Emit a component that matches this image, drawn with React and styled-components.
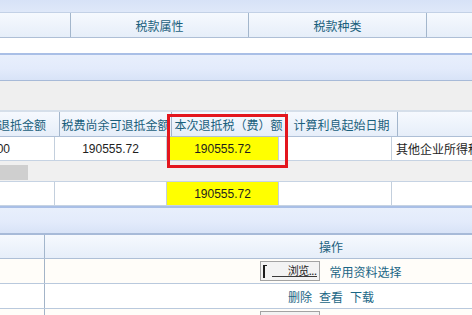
import React from "react";
import styled, { createGlobalStyle } from "styled-components";

const Global = createGlobalStyle`
  html, body { margin: 0; padding: 0; background: #ffffff; overflow: hidden; }
  body { font-family: "Liberation Sans", "Noto Sans CJK SC", sans-serif; font-size: 12px; }
`;

const Page = styled.div`
  position: relative;
  width: 472px;
  height: 315px;
  overflow: hidden;
  display: flex;
  flex-direction: column;
`;

const TopBar = styled.div`
  height: 12px;
  flex: none;
  background: linear-gradient(#d7e2f7, #dfe8f9);
`;

const HeadRow = styled.div`
  display: flex;
  flex: none;
  height: ${(p) => p.$h || 26}px;
  box-sizing: border-box;
  border-top: 1px solid ${(p) => p.$top || "#c3d1e6"};
  border-bottom: 1px solid #aebfd6;
  background: linear-gradient(#f6f9fe, #e6eef9);
`;

const HeadCell = styled.div`
  flex: ${(p) => (p.$w ? "none" : "1")};
  width: ${(p) => (p.$w ? `${p.$w}px` : "auto")};
  box-sizing: border-box;
  border-right: ${(p) => (p.$w ? "1px solid #a3b6cc" : "none")};
  display: flex;
  align-items: center;
  justify-content: ${(p) => p.$align || "center"};
  padding-right: ${(p) => p.$pr || 0}px;
  overflow: hidden;
  white-space: nowrap;
  color: #1a5f7c;
  font-family: "Noto Sans CJK SC", sans-serif;
  font-size: 12px;
`;

const BlankRow = styled.div`
  height: 15px;
  flex: none;
  background: #ffffff;
`;

const Rule = styled.div`
  height: 2px;
  flex: none;
  background: #a9bfe6;
`;

const Band = styled.div`
  height: 26px;
  flex: none;
  box-sizing: border-box;
  border-bottom: 1px solid #a7bad8;
  background: linear-gradient(#e8effc 0%, #e3ebfb 55%, #d8e3f7 100%);
`;

const GrayGap = styled.div`
  height: 30px;
  flex: none;
  background: #efefef;
  border-bottom: 1px solid #d6dfea;
  box-sizing: border-box;
`;

const Grid = styled.div`
  display: flex;
  flex-direction: column;
  flex: none;
`;

const DataRow = styled.div`
  display: flex;
  flex: none;
  height: ${(p) => p.$h || 24}px;
  box-sizing: border-box;
  border-bottom: 1px solid #c6d3e3;
  background: ${(p) => p.$bg || "#ffffff"};
`;

const DataCell = styled.div`
  flex: ${(p) => (p.$w ? "none" : "1")};
  width: ${(p) => (p.$w ? `${p.$w}px` : "auto")};
  box-sizing: border-box;
  border-right: ${(p) => (p.$w ? "1px solid #c3cfdd" : "none")};
  background: ${(p) => (p.$hl ? "#ffff00" : "transparent")};
  display: flex;
  align-items: center;
  justify-content: ${(p) => p.$align || "center"};
  padding: 0 ${(p) => p.$pr || 0}px 0 ${(p) => p.$pl || 0}px;
  overflow: hidden;
  white-space: nowrap;
  color: #1e1e1e;
  font-family: "Liberation Sans", "Noto Sans CJK SC", sans-serif;
  font-size: 12px;
`;

const ScrollRow = styled.div`
  height: 21px;
  flex: none;
  box-sizing: border-box;
  background: #f0f0f0;
  border-bottom: 1px solid #c6d3e3;
  display: flex;
  align-items: flex-start;
`;

const ScrollThumb = styled.div`
  width: 28px;
  height: 15px;
  margin-top: 4px;
  background: #cfcfcf;
`;

const OpRow = styled.div`
  display: flex;
  flex: none;
  height: 25px;
  box-sizing: border-box;
  border-bottom: 1px solid #b9c9dd;
  background: ${(p) => p.$bg || "#ffffff"};
`;

const OpCell = styled.div`
  flex: none;
  width: ${(p) => p.$w}px;
  box-sizing: border-box;
  border-right: ${(p) => (p.$line ? "1px solid #a3b4c8" : "none")};
  display: flex;
  align-items: center;
  justify-content: center;
  gap: ${(p) => p.$gap || 0}px;
  white-space: nowrap;
`;

const LinkText = styled.span`
  color: #1b6685;
  font-family: "Noto Sans CJK SC", sans-serif;
  font-size: 12px;
`;

const FileBtn = styled.div`
  width: 60px;
  height: 20px;
  box-sizing: border-box;
  border: 1px solid #a3a3a3;
  background: #f3f3f3;
  display: flex;
  align-items: stretch;
  padding: 2px 2px 2px 2px;
`;

const Caret = styled.div`
  width: 4px;
  box-sizing: border-box;
  border-left: 2px solid #1c1c1c;
  border-top: 1px solid #1c1c1c;
  margin-top: 1px;
`;

const BtnFace = styled.div`
  flex: 1;
  margin: 0 0 1px 5px;
  border-bottom: 1px solid #3a3a3a;
  display: flex;
  align-items: center;
  justify-content: flex-end;
  padding-right: 1px;
  color: #222;
  font-family: "Noto Sans CJK SC", sans-serif;
  font-size: 11px;
  letter-spacing: -0.5px;
`;

const Callout = styled.div`
  position: absolute;
  left: 167px;
  top: 114px;
  width: 121px;
  height: 54px;
  box-sizing: border-box;
  border: 3px solid #e3161e;
  pointer-events: none;
`;

export default function App() {
  return (
    <>
      <Global />
      <Page>
        <TopBar />
        <HeadRow>
          <HeadCell $w={71} />
          <HeadCell $w={178}>税款属性</HeadCell>
          <HeadCell $w={178}>税款种类</HeadCell>
          <HeadCell />
        </HeadRow>
        <BlankRow />
        <Rule />
        <Band />
        <GrayGap />
        <Grid>
          <HeadRow $top="#d6dfea">
            <HeadCell $w={60} $align="flex-end" $pr={13}>已退抵金额</HeadCell>
            <HeadCell $w={112}>税费尚余可退抵金额</HeadCell>
            <HeadCell $w={114}>本次退抵税（费）额</HeadCell>
            <HeadCell $w={112}>计算利息起始日期</HeadCell>
            <HeadCell />
          </HeadRow>
          <DataRow>
            <DataCell $w={55} $align="flex-end" $pr={44}>190555.00</DataCell>
            <DataCell $w={112}>190555.72</DataCell>
            <DataCell $w={112} $hl>190555.72</DataCell>
            <DataCell $w={113} />
            <DataCell $align="flex-start" $pl={4}>其他企业所得税</DataCell>
          </DataRow>
          <ScrollRow>
            <ScrollThumb />
          </ScrollRow>
          <DataRow>
            <DataCell $w={55} />
            <DataCell $w={112} />
            <DataCell $w={112} $hl>190555.72</DataCell>
            <DataCell $w={113} />
            <DataCell />
          </DataRow>
        </Grid>
        <Rule />
        <Band />
        <HeadRow $h={25} $top="#a7bad8">
          <HeadCell $w={45} />
          <HeadCell $w={572} style={{ borderRight: "none" }}>操作</HeadCell>
        </HeadRow>
        <OpRow $bg="#fffdf9">
          <OpCell $w={45} $line />
          <OpCell $w={572} $gap={9}>
            <FileBtn>
              <Caret />
              <BtnFace>浏览...</BtnFace>
            </FileBtn>
            <LinkText>常用资料选择</LinkText>
          </OpCell>
        </OpRow>
        <OpRow>
          <OpCell $w={45} $line />
          <OpCell $w={572} $gap={7}>
            <LinkText>删除</LinkText>
            <LinkText>查看</LinkText>
            <LinkText>下载</LinkText>
          </OpCell>
        </OpRow>
        <OpRow $bg="#fffdf9">
          <OpCell $w={45} $line />
          <OpCell $w={572} $gap={9}>
            <FileBtn>
              <Caret />
              <BtnFace>浏览...</BtnFace>
            </FileBtn>
            <LinkText>常用资料选择</LinkText>
          </OpCell>
        </OpRow>
        <Callout />
      </Page>
    </>
  );
}
